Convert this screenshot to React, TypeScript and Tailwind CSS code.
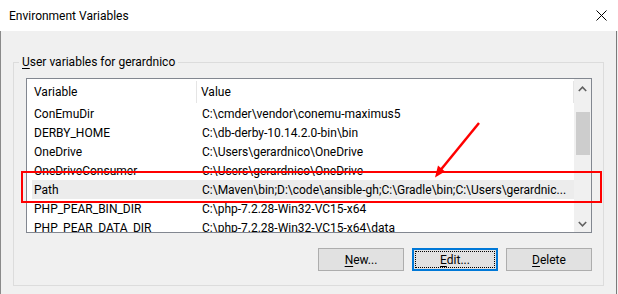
import React from "react";

const rows: [string, string][] = [
  ["ConEmuDir", "C:\\cmder\\vendor\\conemu-maximus5"],
  ["DERBY_HOME", "C:\\db-derby-10.14.2.0-bin\\bin"],
  ["OneDrive", "C:\\Users\\gerardnico\\OneDrive"],
  ["OneDriveConsumer", "C:\\Users\\gerardnico\\OneDrive"],
  ["Path", "C:\\Maven\\bin;D:\\code\\ansible-gh;C:\\Gradle\\bin;C:\\Users\\gerardnic..."],
  ["PHP_PEAR_BIN_DIR", "C:\\php-7.2.28-Win32-VC15-x64"],
  ["PHP_PEAR_DATA_DIR", "C:\\php-7.2.28-Win32-VC15-x64\\data"],
];

function Btn({ k, rest, focused }: { k: string; rest: string; focused?: boolean }) {
  return (
    <div
      className={
        focused
          ? "relative w-[86px] h-[23px] bg-[#e1e1e1] border-2 border-[#0078d7] flex items-center justify-center"
          : "relative w-[86px] h-[23px] bg-[#e1e1e1] border border-[#adadad] flex items-center justify-center"
      }
    >
      {focused && <div className="absolute inset-[1px] border border-dotted border-black" />}
      <span>
        <span className="underline underline-offset-2">{k}</span>
        {rest}
      </span>
    </div>
  );
}

export default function App() {
  return (
    <div className="relative w-[618px] h-[294px] overflow-hidden bg-[#f0f0f0] text-[12px] leading-[16px] text-black font-['Roboto',sans-serif] flex flex-col">
      <div className="h-[31px] shrink-0 bg-white flex items-center justify-between pl-[9px] pr-[11px]">
        <span>Environment Variables</span>
        <svg width="11" height="11" viewBox="0 0 11 11">
          <path d="M0.5 0.5 L10.5 10.5 M10.5 0.5 L0.5 10.5" stroke="#000" strokeWidth="1" />
        </svg>
      </div>
      <div className="flex-1 flex border-l border-[#8a8a8a]">
        <div className="flex-1 pt-[31px] pl-[12px]">
          <div className="relative w-[591px] h-[224px] border border-[#dcdcdc] pt-[15px] pl-[12px]">
            <span className="absolute left-[5px] top-[-9px] px-[3px] bg-[#f0f0f0] leading-[16px]">
              <span className="underline underline-offset-2">U</span>ser variables for gerardnico
            </span>
            <div className="w-[566px] h-[155px] border border-[#828790] bg-white flex">
              <div className="flex-1 flex flex-col overflow-hidden">
                <div className="h-[25px] shrink-0 flex items-center">
                  <div className="w-[5px]" />
                  <div className="w-[165px] h-[22px] pl-[2px] flex items-center border-r border-[#e5e5e5]">
                    Variable
                  </div>
                  <div className="flex-1 h-[22px] pl-[4px] flex items-center border-r border-[#e5e5e5]">
                    Value
                  </div>
                </div>
                {rows.map(([n, v]) => (
                  <div
                    key={n}
                    className={
                      n === "Path"
                        ? "h-[19px] shrink-0 ml-[5px] flex items-center whitespace-nowrap bg-[#ececec]"
                        : "h-[19px] shrink-0 ml-[5px] flex items-center whitespace-nowrap"
                    }
                  >
                    <div className="w-[168px] shrink-0 pl-[2px] overflow-hidden">{n}</div>
                    <div className="flex-1 pl-[2px] overflow-hidden">{v}</div>
                  </div>
                ))}
              </div>
              <div className="w-[17px] shrink-0 bg-[#f0f0f0] flex flex-col">
                <div className="h-[17px] flex items-center justify-center pt-[3px]">
                  <svg width="9" height="6" viewBox="0 0 9 6">
                    <path d="M0.8 5 L4.5 1.2 L8.2 5" fill="none" stroke="#606060" strokeWidth="1.6" />
                  </svg>
                </div>
                <div className="flex-1 pt-[16px]">
                  <div className="h-[43px] ml-[2px] mr-[1px] bg-[#cdcdcd]" />
                </div>
                <div className="h-[17px] flex items-center justify-center">
                  <svg width="9" height="6" viewBox="0 0 9 6">
                    <path d="M0.8 1 L4.5 4.8 L8.2 1" fill="none" stroke="#606060" strokeWidth="1.6" />
                  </svg>
                </div>
              </div>
            </div>
            <div className="w-[566px] mt-[15px] flex justify-end gap-2">
              <Btn k="N" rest="ew..." />
              <Btn k="E" rest="dit..." focused />
              <Btn k="D" rest="elete" />
            </div>
          </div>
        </div>
        <div className="w-[1px] bg-[#7a7a7a]" />
        <div className="w-[1px]" />
      </div>
      <div className="absolute left-[21px] top-[171px] w-[581px] h-[32px] border-2 border-[#ff0000] pointer-events-none" />
      <svg className="absolute left-0 top-0 pointer-events-none" width="618" height="294" viewBox="0 0 618 294">
        <line x1="479" y1="123" x2="441" y2="169.5" stroke="#ff0000" strokeWidth="2.5" />
        <polygon points="435,177.5 445,171.5 438,165.5" fill="#ff0000" />
      </svg>
    </div>
  );
}
